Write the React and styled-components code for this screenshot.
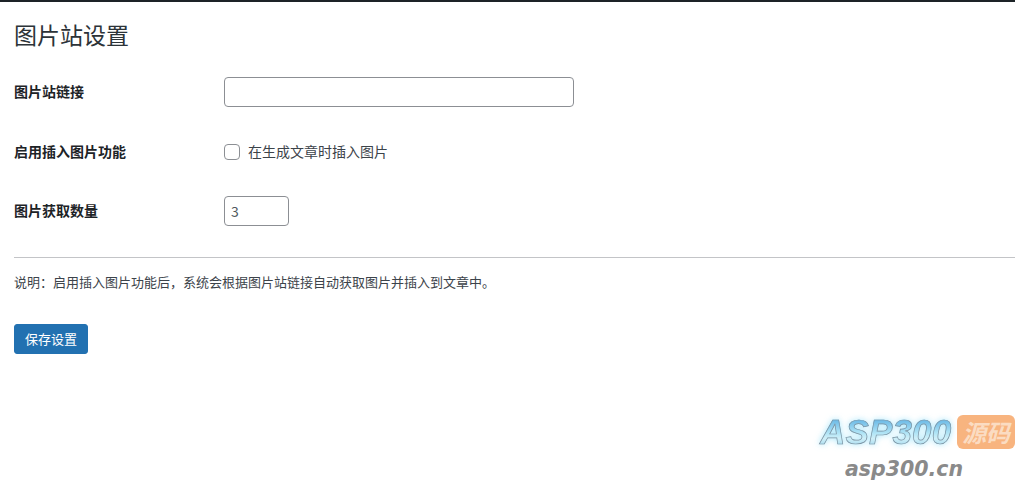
import React from "react";
import styled, { createGlobalStyle } from "styled-components";

const Global = createGlobalStyle`
  html, body { margin: 0; padding: 0; background: #fff; }
  body { font-family: "Noto Sans CJK SC", "Noto Sans", sans-serif; color: #3c434a; }
  * { box-sizing: border-box; }
`;

const Page = styled.div`
  position: relative;
  width: 1015px;
  height: 490px;
  overflow: hidden;
  border-top: 2px solid #1d2327;
`;

const Content = styled.form`
  padding: 0 0 0 14px;
`;

const Title = styled.h1`
  margin: 0;
  height: 60px;
  display: flex;
  align-items: center;
  padding-top: 4px;
  font-size: 23px;
  font-weight: 400;
  line-height: 32px;
  color: #2c3338;
`;

const Row = styled.div`
  display: grid;
  grid-template-columns: 210px 1fr;
  align-items: center;
  height: ${(p) => p.$height}px;
`;

const Label = styled.label`
  padding-bottom: 2px;
  font-size: 14px;
  font-weight: 700;
  line-height: 20px;
  color: #1d2327;
`;

const Field = styled.input`
  display: block;
  width: ${(p) => p.$width}px;
  height: 30px;
  margin: 0;
  padding: 0 6px;
  border: 1px solid #8c8f94;
  border-radius: 4px;
  background: #fff;
  font-family: inherit;
  font-size: 14px;
  color: #50575e;
  outline: none;
  appearance: textfield;
`;

const CheckLine = styled.label`
  display: flex;
  align-items: center;
  gap: 8px;
  font-size: 14px;
  line-height: 20px;
  color: #3c434a;
`;

const CheckText = styled.span`
  padding-bottom: 2px;
`;

const Check = styled.input`
  width: 16px;
  height: 16px;
  margin: 0;
  appearance: none;
  border: 1px solid #8c8f94;
  border-radius: 4px;
  background: #fff;
`;

const Divider = styled.hr`
  margin: 16px 0 0;
  border: 0;
  border-top: 1px solid #c3c4c7;
`;

const Note = styled.p`
  margin: 14px 0 0;
  font-size: 13px;
  line-height: 20px;
  color: #3c434a;
`;

const Save = styled.button`
  display: block;
  width: 74px;
  height: 30px;
  margin-top: 32px;
  padding: 0 0 2px;
  border: 1px solid #2271b1;
  border-radius: 3px;
  background: #2271b1;
  color: #fff;
  font-family: inherit;
  font-size: 13px;
`;

const Watermark = styled.div`
  position: absolute;
  left: 820px;
  top: 412px;
  width: 195px;
  display: flex;
  flex-direction: column;
`;

const LogoTop = styled.div`
  display: flex;
  align-items: center;
  gap: 6px;
  height: 36px;
`;

const LogoWord = styled.span`
  font-family: "Liberation Sans", Arial, sans-serif;
  font-size: 35px;
  line-height: 36px;
  font-weight: 700;
  font-style: italic;
  letter-spacing: 0.15px;
  background: linear-gradient(180deg, #62b4e4 12%, #b4e6f6 55%, #cfeff8 68%, #8fcfea 100%);
  -webkit-background-clip: text;
  background-clip: text;
  color: transparent;
  -webkit-text-stroke: 0.7px #7d93a2;
  filter: drop-shadow(0 0 3px rgba(150, 225, 250, 0.8));
`;

const LogoBadge = styled.span`
  width: 58px;
  height: 34px;
  border-radius: 6px;
  background: #f8b47f;
  color: #fbdcc2;
  font-family: "Noto Sans CJK SC", sans-serif;
  font-size: 24px;
  font-weight: 700;
  font-style: italic;
  line-height: 34px;
  text-align: center;
  white-space: nowrap;
`;

const LogoUrl = styled.span`
  margin: 3px 0 0 25px;
  font-family: "DejaVu Sans", sans-serif;
  font-size: 20.5px;
  line-height: 32px;
  font-weight: 700;
  font-style: italic;
  color: #8a8a8a;
`;

export default function App() {
  return (
    <Page>
      <Global />
      <Content>
        <Title>图片站设置</Title>
        <Row $height={60}>
          <Label htmlFor="site">图片站链接</Label>
          <Field id="site" type="text" $width={350} defaultValue="" />
        </Row>
        <Row $height={59}>
          <Label>启用插入图片功能</Label>
          <CheckLine>
            <Check type="checkbox" />
            <CheckText>在生成文章时插入图片</CheckText>
          </CheckLine>
        </Row>
        <Row $height={60}>
          <Label htmlFor="count">图片获取数量</Label>
          <Field id="count" type="number" $width={65} defaultValue="3" />
        </Row>
        <Divider />
        <Note>说明：启用插入图片功能后，系统会根据图片站链接自动获取图片并插入到文章中。</Note>
        <Save type="button">保存设置</Save>
      </Content>
      <Watermark>
        <LogoTop>
          <LogoWord>ASP300</LogoWord>
          <LogoBadge>源码</LogoBadge>
        </LogoTop>
        <LogoUrl>asp300.cn</LogoUrl>
      </Watermark>
    </Page>
  );
}
